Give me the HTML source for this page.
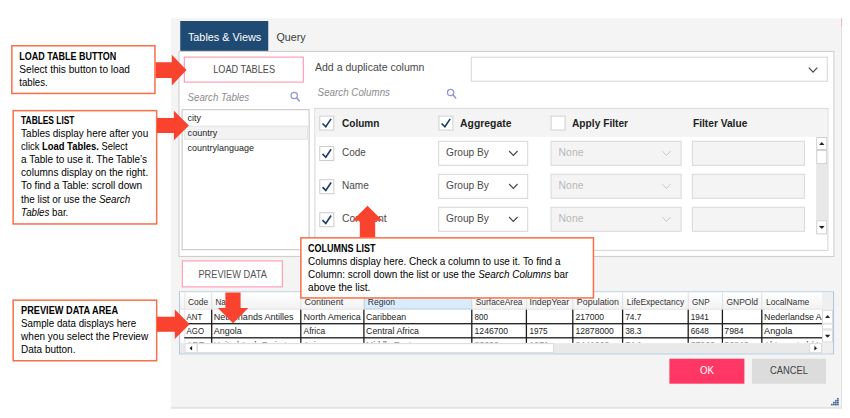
<!DOCTYPE html>
<html lang="en"><head><meta charset="utf-8"><title>Tables &amp; Views</title>
<style>
html,body{margin:0;padding:0;background:#fff;}
body{width:850px;height:418px;position:relative;overflow:hidden;font-family:"Liberation Sans", sans-serif;}
#root{position:absolute;left:0;top:0;width:850px;height:418px;overflow:hidden;}
#root div,#root svg,#root span.t{position:absolute;left:0;top:0;transform-origin:0 0;}
span.t{white-space:nowrap;line-height:1;display:block;}
span.t b{font-weight:bold;} span.t i{font-style:italic;}
</style></head>
<body><div id="root">
<div style="transform:translate(171.05px,18.1px);width:670px;height:389px;background:#f4f4f4;"></div>
<div style="transform:translate(841.1px,18.4px);width:0.9px;height:390px;background:#dedede;"></div>
<div style="transform:translate(170.95px,406.8px);width:671px;height:2px;background:#e3e3e3;"></div>
<div style="transform:translate(841.1px,18.2px);width:0.9px;height:9px;background:#f0b8c4;"></div>
<div style="transform:translate(180.25px,21.0px);width:88px;height:30px;background:#1f4a73;"></div>
<span class="t" style="transform:translate(187.9px,31.8px) scaleX(0.9607);font-size:11.3px;color:#fff;">Tables &amp; Views</span>
<span class="t" style="transform:translate(276.4px,31.8px) scaleX(0.9491);font-size:11.3px;color:#3a3a3a;">Query</span>
<div style="transform:translate(178.45px,50.9px);width:656px;height:206px;background:#fff;border:1px solid #c9c9c9;box-sizing:border-box;"></div>
<div style="transform:translate(183.8px,56.6px);width:120px;height:26px;background:#fff;border:1px solid #ff8ca5;box-sizing:border-box;"></div>
<span class="t" style="transform:translate(213.2px,64.3px) scaleX(0.7968);font-size:11.5px;color:#4a4a4a;">LOAD TABLES</span>
<span class="t" style="transform:translate(187.6px,91.6px) scaleX(0.881);font-size:11px;color:#8c8c8c;font-style:italic;">Search Tables</span>
<div style="transform:translate(181.6px,109.2px);width:128px;height:141px;background:#fff;border:1px solid #c4c4c4;box-sizing:border-box;"></div>
<div style="transform:translate(184.1px,125.7px);width:124px;height:14px;background:#f3f3f3;border:1px solid #e4e4e4;box-sizing:border-box;"></div>
<span class="t" style="transform:translate(187.6px,114px) scaleX(0.9723);font-size:9.2px;color:#222;">city</span>
<span class="t" style="transform:translate(187.6px,128.8px) scaleX(0.9854);font-size:9.2px;color:#222;">country</span>
<span class="t" style="transform:translate(187.6px,143.9px) scaleX(0.9774);font-size:9.2px;color:#222;">countrylanguage</span>
<span class="t" style="transform:translate(315px,61.7px) scaleX(0.9566);font-size:11px;color:#484848;">Add a duplicate column</span>
<div style="transform:translate(470.8px,56.7px);width:357px;height:25px;background:#fff;border:1px solid #d6d6d6;box-sizing:border-box;"></div>
<svg style="transform:translate(807.8px,66.6px)" width="10.5" height="6.7" viewBox="0 0 10.5 6.7"><path d="M1 1 L5.25 5.5 L9.5 1" fill="none" stroke="#444" stroke-width="1.1"/></svg>
<span class="t" style="transform:translate(317.6px,87.2px) scaleX(0.8902);font-size:11px;color:#8c8c8c;font-style:italic;">Search Columns</span>
<svg style="transform:translate(289.2px,90.4px)" width="12" height="12" viewBox="0 0 12 12"><circle cx="5" cy="5" r="3.15" fill="none" stroke="#9494da" stroke-width="1.25"/><path d="M7.4 7.4 L10.1 10.6" stroke="#9494da" stroke-width="1.5" stroke-linecap="round"/></svg>
<svg style="transform:translate(445.6px,87.4px)" width="12" height="12" viewBox="0 0 12 12"><circle cx="5" cy="5" r="3.15" fill="none" stroke="#9494da" stroke-width="1.25"/><path d="M7.4 7.4 L10.1 10.6" stroke="#9494da" stroke-width="1.5" stroke-linecap="round"/></svg>
<div style="transform:translate(314.4px,107.9px);width:514px;height:143px;background:#fff;border:1px solid #d4d4d4;box-sizing:border-box;"></div>
<div style="transform:translate(315.4px,108.9px);width:512px;height:28px;background:#f4f4f4;"></div>
<div style="transform:translate(319.3px,115.6px);width:15px;height:15px;background:#fff;border:1px solid #cdcdcd;box-sizing:border-box;"><svg width="15" height="15" viewBox="0 0 15 15" style="left:-1px;top:-1px"><path d="M3.2 7.9 L6.5 11.2 L11.8 3.3" fill="none" stroke="#163d6b" stroke-width="1.6"/></svg></div>
<div style="transform:translate(438.4px,115.6px);width:15px;height:15px;background:#fff;border:1px solid #cdcdcd;box-sizing:border-box;"><svg width="15" height="15" viewBox="0 0 15 15" style="left:-1px;top:-1px"><path d="M3.2 7.9 L6.5 11.2 L11.8 3.3" fill="none" stroke="#163d6b" stroke-width="1.6"/></svg></div>
<div style="transform:translate(550.6px,115.6px);width:15px;height:15px;background:#fff;border:1px solid #cdcdcd;box-sizing:border-box;"></div>
<span class="t" style="transform:translate(342px,117.7px) scaleX(0.8982);font-size:11.2px;font-weight:bold;color:#222;">Column</span>
<span class="t" style="transform:translate(460.1px,117.7px) scaleX(0.9272);font-size:11.2px;font-weight:bold;color:#222;">Aggregate</span>
<span class="t" style="transform:translate(572px,117.7px) scaleX(0.9115);font-size:11.2px;font-weight:bold;color:#222;">Apply Filter</span>
<span class="t" style="transform:translate(693px,117.7px) scaleX(0.9095);font-size:11.2px;font-weight:bold;color:#222;">Filter Value</span>
<div style="transform:translate(319.3px,146.0px);width:15px;height:15px;background:#fff;border:1px solid #cdcdcd;box-sizing:border-box;"><svg width="15" height="15" viewBox="0 0 15 15" style="left:-1px;top:-1px"><path d="M3.2 7.9 L6.5 11.2 L11.8 3.3" fill="none" stroke="#163d6b" stroke-width="1.6"/></svg></div>
<span class="t" style="transform:translate(342px,147.4px) scaleX(0.9051);font-size:11px;color:#4a4a4a;">Code</span>
<div style="transform:translate(438.2px,140.8px);width:90px;height:25px;background:#fff;border:1px solid #d6d6d6;box-sizing:border-box;"></div>
<span class="t" style="transform:translate(446px,147.4px) scaleX(0.9232);font-size:11px;color:#4a4a4a;">Group By</span>
<svg style="transform:translate(508.1px,150.0px)" width="10.5" height="6.7" viewBox="0 0 10.5 6.7"><path d="M1 1 L5.25 5.5 L9.5 1" fill="none" stroke="#444" stroke-width="1.1"/></svg>
<div style="transform:translate(550.6px,140.8px);width:131px;height:25px;background:#f4f4f4;border:1px solid #dadada;box-sizing:border-box;"></div>
<span class="t" style="transform:translate(558.6px,147.4px) scaleX(0.9469);font-size:11px;color:#b8b8b8;">None</span>
<svg style="transform:translate(661.2px,150.0px)" width="10.5" height="6.7" viewBox="0 0 10.5 6.7"><path d="M1 1 L5.25 5.5 L9.5 1" fill="none" stroke="#c4c4c4" stroke-width="0.9"/></svg>
<div style="transform:translate(691.9px,140.8px);width:113px;height:25px;background:#f4f4f4;border:1px solid #dadada;box-sizing:border-box;"></div>
<div style="transform:translate(319.3px,179.2px);width:15px;height:15px;background:#fff;border:1px solid #cdcdcd;box-sizing:border-box;"><svg width="15" height="15" viewBox="0 0 15 15" style="left:-1px;top:-1px"><path d="M3.2 7.9 L6.5 11.2 L11.8 3.3" fill="none" stroke="#163d6b" stroke-width="1.6"/></svg></div>
<span class="t" style="transform:translate(342px,180.4px) scaleX(0.9133);font-size:11px;color:#4a4a4a;">Name</span>
<div style="transform:translate(438.2px,173.8px);width:90px;height:25px;background:#fff;border:1px solid #d6d6d6;box-sizing:border-box;"></div>
<span class="t" style="transform:translate(446px,180.4px) scaleX(0.9232);font-size:11px;color:#4a4a4a;">Group By</span>
<svg style="transform:translate(508.1px,183.0px)" width="10.5" height="6.7" viewBox="0 0 10.5 6.7"><path d="M1 1 L5.25 5.5 L9.5 1" fill="none" stroke="#444" stroke-width="1.1"/></svg>
<div style="transform:translate(550.6px,173.8px);width:131px;height:25px;background:#f4f4f4;border:1px solid #dadada;box-sizing:border-box;"></div>
<span class="t" style="transform:translate(558.6px,180.4px) scaleX(0.9469);font-size:11px;color:#b8b8b8;">None</span>
<svg style="transform:translate(661.2px,183.0px)" width="10.5" height="6.7" viewBox="0 0 10.5 6.7"><path d="M1 1 L5.25 5.5 L9.5 1" fill="none" stroke="#c4c4c4" stroke-width="0.9"/></svg>
<div style="transform:translate(691.9px,173.8px);width:113px;height:25px;background:#f4f4f4;border:1px solid #dadada;box-sizing:border-box;"></div>
<div style="transform:translate(319.3px,212.2px);width:15px;height:15px;background:#fff;border:1px solid #cdcdcd;box-sizing:border-box;"><svg width="15" height="15" viewBox="0 0 15 15" style="left:-1px;top:-1px"><path d="M3.2 7.9 L6.5 11.2 L11.8 3.3" fill="none" stroke="#163d6b" stroke-width="1.6"/></svg></div>
<span class="t" style="transform:translate(342px,213.4px) scaleX(0.9492);font-size:11px;color:#4a4a4a;">Continent</span>
<div style="transform:translate(438.2px,206.8px);width:90px;height:25px;background:#fff;border:1px solid #d6d6d6;box-sizing:border-box;"></div>
<span class="t" style="transform:translate(446px,213.4px) scaleX(0.9232);font-size:11px;color:#4a4a4a;">Group By</span>
<svg style="transform:translate(508.1px,216.0px)" width="10.5" height="6.7" viewBox="0 0 10.5 6.7"><path d="M1 1 L5.25 5.5 L9.5 1" fill="none" stroke="#444" stroke-width="1.1"/></svg>
<div style="transform:translate(550.6px,206.8px);width:131px;height:25px;background:#f4f4f4;border:1px solid #dadada;box-sizing:border-box;"></div>
<span class="t" style="transform:translate(558.6px,213.4px) scaleX(0.9469);font-size:11px;color:#b8b8b8;">None</span>
<svg style="transform:translate(661.2px,216.0px)" width="10.5" height="6.7" viewBox="0 0 10.5 6.7"><path d="M1 1 L5.25 5.5 L9.5 1" fill="none" stroke="#c4c4c4" stroke-width="0.9"/></svg>
<div style="transform:translate(691.9px,206.8px);width:113px;height:25px;background:#f4f4f4;border:1px solid #dadada;box-sizing:border-box;"></div>
<div style="transform:translate(816.2px,137.0px);width:11px;height:97px;background:#e8e8e8;"></div>
<div style="transform:translate(816.2px,137.0px);width:11px;height:13px;background:#fff;border:1px solid #cfcfcf;box-sizing:border-box;"></div>
<div style="transform:translate(816.2px,150.1px);width:11px;height:14px;background:#fff;border:1px solid #cfcfcf;box-sizing:border-box;"></div>
<div style="transform:translate(816.2px,220.3px);width:11px;height:14px;background:#fff;border:1px solid #cfcfcf;box-sizing:border-box;"></div>
<svg style="transform:translate(818.8px,142px)" width="6" height="3.4" viewBox="0 0 6 3.4"><path d="M0 3.4 L3 0 L6 3.4 Z" fill="#222"/></svg>
<svg style="transform:translate(818.8px,225.8px)" width="6" height="3.4" viewBox="0 0 6 3.4"><path d="M0 0 L3 3.4 L6 0 Z" fill="#222"/></svg>
<div style="transform:translate(181.8px,260.4px);width:101px;height:27px;background:#fff;border:1px solid #ff8ca5;box-sizing:border-box;"></div>
<span class="t" style="transform:translate(198.4px,268.6px) scaleX(0.8028);font-size:11.5px;color:#555;">PREVIEW DATA</span>
<div style="transform:translate(179.1px,291.4px);width:655px;height:63px;background:#fff;border:1px solid #a9c2dd;box-sizing:border-box;"></div>
<div style="transform:translate(180.1px,292.3px);width:642px;height:17px;background:linear-gradient(#ffffff,#f2f2f2);"></div>
<div style="transform:translate(822.0px,292.4px);width:11px;height:61px;background:#efefef;"></div>
<div style="transform:translate(364.0px,292.4px);width:108px;height:17px;background:#d9ecfb;border:1px solid #a8d4f5;box-sizing:border-box;"></div>
<svg style="transform:translate(0px,0px)" width="850" height="418" viewBox="0 0 850 418"><rect x="184.3" y="292.4" width="1" height="50.5" fill="#e4e4e4"/><rect x="211.2" y="292.4" width="1" height="16.8" fill="#dedede"/><rect x="211.04999999999998" y="309.2" width="1.3" height="33.6" fill="#1c1c1c"/><rect x="300.3" y="292.4" width="1" height="16.8" fill="#dedede"/><rect x="300.15000000000003" y="309.2" width="1.3" height="33.6" fill="#1c1c1c"/><rect x="363.4" y="292.4" width="1" height="16.8" fill="#dedede"/><rect x="363.25" y="309.2" width="1.3" height="33.6" fill="#1c1c1c"/><rect x="471.3" y="292.4" width="1" height="16.8" fill="#dedede"/><rect x="471.15000000000003" y="309.2" width="1.3" height="33.6" fill="#1c1c1c"/><rect x="525.9" y="292.4" width="1" height="16.8" fill="#dedede"/><rect x="525.75" y="309.2" width="1.3" height="33.6" fill="#1c1c1c"/><rect x="572.3" y="292.4" width="1" height="16.8" fill="#dedede"/><rect x="572.15" y="309.2" width="1.3" height="33.6" fill="#1c1c1c"/><rect x="622.1" y="292.4" width="1" height="16.8" fill="#dedede"/><rect x="621.95" y="309.2" width="1.3" height="33.6" fill="#1c1c1c"/><rect x="687.7" y="292.4" width="1" height="16.8" fill="#dedede"/><rect x="687.5500000000001" y="309.2" width="1.3" height="33.6" fill="#1c1c1c"/><rect x="721.9" y="292.4" width="1" height="16.8" fill="#dedede"/><rect x="721.75" y="309.2" width="1.3" height="33.6" fill="#1c1c1c"/><rect x="761.3" y="292.4" width="1" height="16.8" fill="#dedede"/><rect x="761.15" y="309.2" width="1.3" height="33.6" fill="#1c1c1c"/><rect x="184.3" y="323.05" width="637.7" height="1.3" fill="#1c1c1c"/><rect x="184.3" y="337.15000000000003" width="637.7" height="1.3" fill="#1c1c1c"/><rect x="180.2" y="308.8" width="641.8" height="0.8" fill="#e0e0e0"/></svg>
<span class="t" style="transform:translate(187.9px,297.5px) scaleX(0.9085);font-size:9.3px;color:#333;">Code</span>
<span class="t" style="transform:translate(215.5px,297.5px) scaleX(0.8665);font-size:9.3px;color:#333;">Name</span>
<span class="t" style="transform:translate(304.4px,297.5px) scaleX(0.9746);font-size:9.3px;color:#333;">Continent</span>
<span class="t" style="transform:translate(367.8px,297.5px) scaleX(0.9196);font-size:9.3px;color:#333;">Region</span>
<span class="t" style="transform:translate(475.7px,297.5px) scaleX(0.9054);font-size:9.3px;color:#333;">SurfaceArea</span>
<span class="t" style="transform:translate(529.5px,297.5px) scaleX(0.9415);font-size:9.3px;color:#333;">IndepYear</span>
<span class="t" style="transform:translate(576.8px,297.5px) scaleX(0.9601);font-size:9.3px;color:#333;">Population</span>
<span class="t" style="transform:translate(626.8px,297.5px) scaleX(0.9102);font-size:9.3px;color:#333;">LifeExpectancy</span>
<span class="t" style="transform:translate(692px,297.5px) scaleX(0.8732);font-size:9.3px;color:#333;">GNP</span>
<span class="t" style="transform:translate(726.4px,297.5px) scaleX(0.9126);font-size:9.3px;color:#333;">GNPOld</span>
<span class="t" style="transform:translate(765.9px,297.5px) scaleX(0.9228);font-size:9.3px;color:#333;">LocalName</span>
<span class="t" style="transform:translate(186.6px,313.2px) scaleX(0.8383);font-size:9.3px;color:#222;">ANT</span>
<span class="t" style="transform:translate(213.8px,313.2px) scaleX(0.9699);font-size:9.3px;color:#222;">Netherlands Antilles</span>
<span class="t" style="transform:translate(303.6px,313.2px) scaleX(0.971);font-size:9.3px;color:#222;">North America</span>
<span class="t" style="transform:translate(366px,313.2px) scaleX(0.9346);font-size:9.3px;color:#222;">Caribbean</span>
<span class="t" style="transform:translate(474.6px,313.2px) scaleX(0.8701);font-size:9.3px;color:#222;">800</span>
<span class="t" style="transform:translate(575.5px,313.2px) scaleX(0.9184);font-size:9.3px;color:#222;">217000</span>
<span class="t" style="transform:translate(625.2px,313.2px) scaleX(0.9001);font-size:9.3px;color:#222;">74.7</span>
<span class="t" style="transform:translate(690.7px,313.2px) scaleX(0.8749);font-size:9.3px;color:#222;">1941</span>
<span class="t" style="transform:translate(186.6px,327.2px) scaleX(0.8417);font-size:9.3px;color:#222;">AGO</span>
<span class="t" style="transform:translate(213.8px,327.2px) scaleX(0.9671);font-size:9.3px;color:#222;">Angola</span>
<span class="t" style="transform:translate(303.6px,327.2px) scaleX(0.9047);font-size:9.3px;color:#222;">Africa</span>
<span class="t" style="transform:translate(366px,327.2px) scaleX(0.9496);font-size:9.3px;color:#222;">Central Africa</span>
<span class="t" style="transform:translate(474.6px,327.2px) scaleX(0.9226);font-size:9.3px;color:#222;">1246700</span>
<span class="t" style="transform:translate(529.5px,327.2px) scaleX(0.8749);font-size:9.3px;color:#222;">1975</span>
<span class="t" style="transform:translate(575.5px,327.2px) scaleX(0.9257);font-size:9.3px;color:#222;">12878000</span>
<span class="t" style="transform:translate(625.2px,327.2px) scaleX(0.9001);font-size:9.3px;color:#222;">38.3</span>
<span class="t" style="transform:translate(690.7px,327.2px) scaleX(0.8749);font-size:9.3px;color:#222;">6648</span>
<span class="t" style="transform:translate(724.3px,327.2px) scaleX(0.9378);font-size:9.3px;color:#222;">7984</span>
<span class="t" style="transform:translate(764.1px,327.2px) scaleX(0.974);font-size:9.3px;color:#222;">Angola</span>
<div style="transform:translate(180.2px,309.4px);width:641.6px;height:33.3px;overflow:hidden;"><span class="t" style="transform:translate(583.9px,3.8px) scaleX(0.945);font-size:9.3px;color:#222;">Nederlandse Antillen</span><span class="t" style="transform:translate(6.4px,32.0px) scaleX(0.935);font-size:9.3px;color:#222;">ARE</span><span class="t" style="transform:translate(33.6px,32.0px) scaleX(0.935);font-size:9.3px;color:#222;">United Arab Emirates</span><span class="t" style="transform:translate(123.4px,32.0px) scaleX(0.935);font-size:9.3px;color:#222;">Asia</span><span class="t" style="transform:translate(185.8px,32.0px) scaleX(0.935);font-size:9.3px;color:#222;">Middle East</span><span class="t" style="transform:translate(294.4px,32.0px) scaleX(0.935);font-size:9.3px;color:#222;">83600</span><span class="t" style="transform:translate(349.3px,32.0px) scaleX(0.935);font-size:9.3px;color:#222;">1971</span><span class="t" style="transform:translate(395.3px,32.0px) scaleX(0.935);font-size:9.3px;color:#222;">2441000</span><span class="t" style="transform:translate(445.0px,32.0px) scaleX(0.935);font-size:9.3px;color:#222;">74.1</span><span class="t" style="transform:translate(510.5px,32.0px) scaleX(0.935);font-size:9.3px;color:#222;">37966</span><span class="t" style="transform:translate(544.1px,32.0px) scaleX(0.935);font-size:9.3px;color:#222;">36846</span><span class="t" style="transform:translate(583.9px,32.0px) scaleX(0.935);font-size:9.3px;color:#222;">Al-Imarat al-´Arabiya al-Muttahida</span></div>
<div style="transform:translate(180.1px,343.15px);width:642px;height:10px;background:#e9e9e9;"></div>
<div style="transform:translate(184.5px,343.15px);width:13px;height:10px;background:#fff;border:1px solid #d9d9d9;box-sizing:border-box;"></div>
<div style="transform:translate(197.15px,343.15px);width:357px;height:10px;background:#fff;border:1px solid #d9d9d9;box-sizing:border-box;"></div>
<div style="transform:translate(809.1px,343.15px);width:13px;height:10px;background:#fff;border:1px solid #d9d9d9;box-sizing:border-box;"></div>
<svg style="transform:translate(189.4px,345.7px)" width="2.9" height="5" viewBox="0 0 2.9 5"><path d="M2.9 0 L0 2.5 L2.9 5 Z" fill="#222"/></svg>
<svg style="transform:translate(814.2px,345.7px)" width="2.9" height="5" viewBox="0 0 2.9 5"><path d="M0 0 L2.9 2.5 L0 5 Z" fill="#222"/></svg>
<div style="transform:translate(822.0px,309.8px);width:11px;height:14px;background:#fff;border:1px solid #d9d9d9;box-sizing:border-box;"></div>
<div style="transform:translate(822.0px,323.5px);width:11px;height:6px;background:#fff;border:1px solid #d9d9d9;box-sizing:border-box;"></div>
<div style="transform:translate(822.0px,329.5px);width:11px;height:13px;background:#fff;border:1px solid #d9d9d9;box-sizing:border-box;"></div>
<svg style="transform:translate(824.7px,315.1px)" width="5.8" height="3.4" viewBox="0 0 5.8 3.4"><path d="M0 3.4 L2.9 0 L5.8 3.4 Z" fill="#222"/></svg>
<svg style="transform:translate(824.7px,334.6px)" width="5.8" height="3.4" viewBox="0 0 5.8 3.4"><path d="M0 0 L2.9 3.4 L5.8 0 Z" fill="#222"/></svg>
<div style="transform:translate(669.4px,358.7px);width:75px;height:25px;background:#ff3764;"></div>
<span class="t" style="transform:translate(700px,365.2px) scaleX(0.8421);font-size:11.5px;color:#fff;">OK</span>
<div style="transform:translate(751.95px,358.7px);width:74px;height:25px;background:#dcdcdc;"></div>
<span class="t" style="transform:translate(770px,365.2px) scaleX(0.8145);font-size:11.5px;color:#444;">CANCEL</span>
<svg style="transform:translate(831px,397.8px)" width="8" height="8" viewBox="0 0 8 8"><rect x="6" y="0" width="1.7" height="1.7" fill="#3f6794"/><rect x="4" y="2" width="1.7" height="1.7" fill="#3f6794"/><rect x="6" y="2" width="1.7" height="1.7" fill="#3f6794"/><rect x="2" y="4" width="1.7" height="1.7" fill="#3f6794"/><rect x="4" y="4" width="1.7" height="1.7" fill="#3f6794"/><rect x="6" y="4" width="1.7" height="1.7" fill="#3f6794"/><rect x="0" y="6" width="1.7" height="1.7" fill="#3f6794"/><rect x="2" y="6" width="1.7" height="1.7" fill="#3f6794"/><rect x="4" y="6" width="1.7" height="1.7" fill="#3f6794"/><rect x="6" y="6" width="1.7" height="1.7" fill="#3f6794"/></svg>
<svg style="transform:translate(0px,0px)" width="850" height="418" viewBox="0 0 850 418"><rect x="11.85" y="45.75" width="143.1" height="47.7" fill="#fff" stroke="#fa6e48" stroke-width="1.5"/></svg>
<svg style="transform:translate(0px,0px)" width="850" height="418" viewBox="0 0 850 418"><polygon points="155.7,62.199999999999996 171.8,62.199999999999996 171.8,54.8 186.5,70.1 171.8,85.39999999999999 171.8,78.0 155.7,78.0" fill="#f9432f"/></svg>
<span class="t" style="transform:translate(19.3px,51.3px) scaleX(0.8481);font-size:10.6px;color:#000;"><b>LOAD TABLE BUTTON</b></span>
<span class="t" style="transform:translate(19.3px,64.4px) scaleX(0.9532);font-size:10.6px;color:#000;">Select this button to load</span>
<span class="t" style="transform:translate(19.3px,77px) scaleX(0.9097);font-size:10.6px;color:#000;">tables.</span>
<svg style="transform:translate(0px,0px)" width="850" height="418" viewBox="0 0 850 418"><rect x="13.15" y="110.65" width="143.5" height="113.3" fill="#fff" stroke="#fa6e48" stroke-width="1.5"/></svg>
<svg style="transform:translate(0px,0px)" width="850" height="418" viewBox="0 0 850 418"><polygon points="157,118.0 173.9,118.0 173.9,110.7 188.9,125.5 173.9,140.3 173.9,133.0 157,133.0" fill="#f9432f"/></svg>
<span class="t" style="transform:translate(21.1px,114.9px) scaleX(0.7898);font-size:10.6px;color:#000;"><b>TABLES LIST</b></span>
<span class="t" style="transform:translate(21.1px,127.9px) scaleX(0.9425);font-size:10.6px;color:#000;">Tables display here after you</span>
<span class="t" style="transform:translate(21.1px,140.9px) scaleX(0.8882);font-size:10.6px;color:#000;">click <b>Load Tables.</b> Select</span>
<span class="t" style="transform:translate(21.1px,153.9px) scaleX(0.9431);font-size:10.6px;color:#000;">a Table to use it. The Table’s</span>
<span class="t" style="transform:translate(21.1px,167.1px) scaleX(0.9466);font-size:10.6px;color:#000;">columns display on the right.</span>
<span class="t" style="transform:translate(21.1px,180.2px) scaleX(0.9535);font-size:10.6px;color:#000;">To find a Table: scroll down</span>
<span class="t" style="transform:translate(21.1px,193.5px) scaleX(0.9309);font-size:10.6px;color:#000;">the list or use the <i>Search</i></span>
<span class="t" style="transform:translate(21.1px,206.6px) scaleX(0.9173);font-size:10.6px;color:#000;"><i>Tables</i> bar.</span>
<svg style="transform:translate(0px,0px)" width="850" height="418" viewBox="0 0 850 418"><rect x="13.15" y="300.15" width="143.5" height="60.6" fill="#fff" stroke="#fa6e48" stroke-width="1.5"/></svg>
<svg style="transform:translate(0px,0px)" width="850" height="418" viewBox="0 0 850 418"><polygon points="157,316.7 174.8,316.7 174.8,309.4 189.6,324.2 174.8,339.0 174.8,331.7 157,331.7" fill="#f9432f"/></svg>
<span class="t" style="transform:translate(21.1px,304.9px) scaleX(0.8674);font-size:10.6px;color:#000;"><b>PREVIEW DATA AREA</b></span>
<span class="t" style="transform:translate(21.1px,317.9px) scaleX(0.9218);font-size:10.6px;color:#000;">Sample data displays here</span>
<span class="t" style="transform:translate(21.1px,330.8px) scaleX(0.9466);font-size:10.6px;color:#000;">when you select the Preview</span>
<span class="t" style="transform:translate(21.1px,343.8px) scaleX(0.9408);font-size:10.6px;color:#000;">Data button.</span>
<svg style="transform:translate(0px,0px)" width="850" height="418" viewBox="0 0 850 418"><rect x="300.85" y="237.85" width="292.6" height="60.1" fill="#fff" stroke="#fa6e48" stroke-width="1.5"/></svg>
<svg style="transform:translate(0px,0px)" width="850" height="418" viewBox="0 0 850 418"><polygon points="359.8,237.3 359.8,220.8 352.3,220.8 367.5,205.8 382.6,220.8 375.2,220.8 375.2,237.3" fill="#f9432f"/></svg>
<span class="t" style="transform:translate(308.1px,242.5px) scaleX(0.847);font-size:10.6px;color:#000;"><b>COLUMNS LIST</b></span>
<span class="t" style="transform:translate(308.1px,255.8px) scaleX(0.9362);font-size:10.6px;color:#000;">Columns display here. Check a column to use it. To find a</span>
<span class="t" style="transform:translate(308.1px,268.9px) scaleX(0.9345);font-size:10.6px;color:#000;">Column: scroll down the list or use the <i>Search Columns</i> bar</span>
<span class="t" style="transform:translate(308.1px,282px) scaleX(0.953);font-size:10.6px;color:#000;">above the list.</span>
<svg style="transform:translate(0px,0px)" width="850" height="418" viewBox="0 0 850 418"><polygon points="225.4,292.6 240.6,292.6 240.6,308 248.3,308 233,323.2 217.9,308 225.4,308" fill="#f9432f"/></svg>
</div></body></html>
